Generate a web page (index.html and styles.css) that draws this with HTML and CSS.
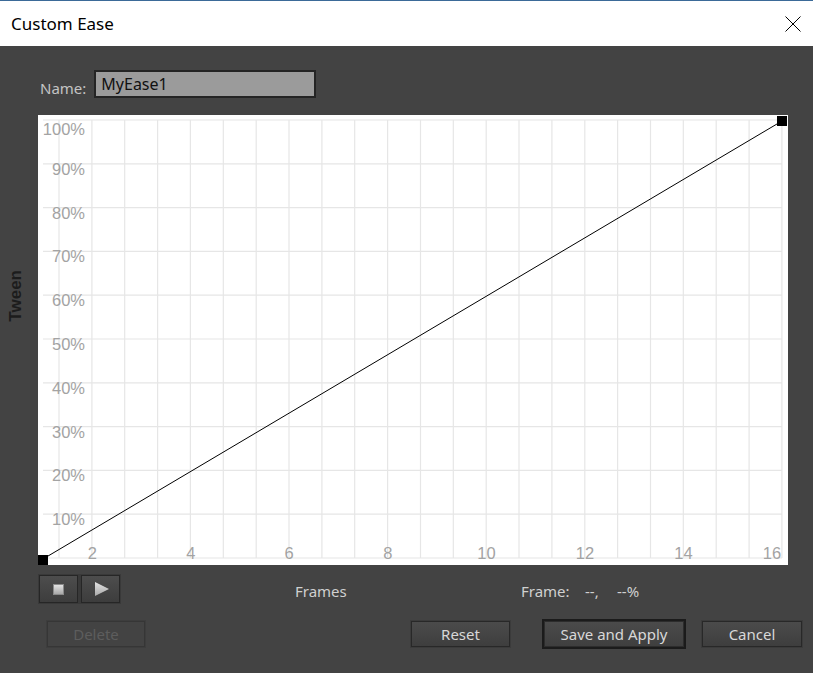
FILE: index.html
```html
<!DOCTYPE html>
<html>
<head>
<meta charset="utf-8">
<title>Custom Ease</title>
<link rel="stylesheet" href="styles.css">
</head>
<body>
<div class="window">
  <header class="titlebar">
    <span class="title">Custom Ease</span>
    <button class="close" aria-label="Close">
      <svg width="16" height="16" viewBox="0 0 16 16"><path d="M0.5 0.5 L15.5 15.5 M15.5 0.5 L0.5 15.5" stroke="#000" stroke-width="1" fill="none"/></svg>
    </button>
  </header>
  <main class="content">
    <div class="name-row">
      <label class="name-label">Name:</label>
      <div class="name-input">MyEase1</div>
    </div>
    <div class="graph-row">
      <div class="axis"><span class="axis-text">Tween</span></div>
      <div class="graph">
        <svg width="750" height="450" viewBox="0 0 750 450">
          <g class="grid">
            <line x1="5" y1="5" x2="744" y2="5"/>
            <line x1="5" y1="48.8" x2="744" y2="48.8"/>
            <line x1="5" y1="92.6" x2="744" y2="92.6"/>
            <line x1="5" y1="136.4" x2="744" y2="136.4"/>
            <line x1="5" y1="180.2" x2="744" y2="180.2"/>
            <line x1="5" y1="224" x2="744" y2="224"/>
            <line x1="5" y1="267.8" x2="744" y2="267.8"/>
            <line x1="5" y1="311.6" x2="744" y2="311.6"/>
            <line x1="5" y1="355.4" x2="744" y2="355.4"/>
            <line x1="5" y1="399.2" x2="744" y2="399.2"/>
            <line x1="5" y1="443" x2="744" y2="443"/>
            <line x1="21" y1="5" x2="21" y2="443"/>
            <line x1="53.9" y1="5" x2="53.9" y2="443"/>
            <line x1="86.7" y1="5" x2="86.7" y2="443"/>
            <line x1="119.6" y1="5" x2="119.6" y2="443"/>
            <line x1="152.4" y1="5" x2="152.4" y2="443"/>
            <line x1="185.3" y1="5" x2="185.3" y2="443"/>
            <line x1="218.2" y1="5" x2="218.2" y2="443"/>
            <line x1="251" y1="5" x2="251" y2="443"/>
            <line x1="283.9" y1="5" x2="283.9" y2="443"/>
            <line x1="316.7" y1="5" x2="316.7" y2="443"/>
            <line x1="349.6" y1="5" x2="349.6" y2="443"/>
            <line x1="382.5" y1="5" x2="382.5" y2="443"/>
            <line x1="415.3" y1="5" x2="415.3" y2="443"/>
            <line x1="448.2" y1="5" x2="448.2" y2="443"/>
            <line x1="481" y1="5" x2="481" y2="443"/>
            <line x1="513.9" y1="5" x2="513.9" y2="443"/>
            <line x1="546.8" y1="5" x2="546.8" y2="443"/>
            <line x1="579.6" y1="5" x2="579.6" y2="443"/>
            <line x1="612.5" y1="5" x2="612.5" y2="443"/>
            <line x1="645.3" y1="5" x2="645.3" y2="443"/>
            <line x1="678.2" y1="5" x2="678.2" y2="443"/>
            <line x1="711.1" y1="5" x2="711.1" y2="443"/>
            <line x1="743.9" y1="5" x2="743.9" y2="443"/>
          </g>
          <g class="ylabels">
            <text x="47" y="20">100%</text>
            <text x="47" y="60">90%</text>
            <text x="47" y="103.6">80%</text>
            <text x="47" y="147.4">70%</text>
            <text x="47" y="191.2">60%</text>
            <text x="47" y="235">50%</text>
            <text x="47" y="278.8">40%</text>
            <text x="47" y="322.6">30%</text>
            <text x="47" y="366.4">20%</text>
            <text x="47" y="410.2">10%</text>
          </g>
          <g class="xlabels">
            <text x="54.3" y="443.5">2</text>
            <text x="152.8" y="443.5">4</text>
            <text x="251" y="443.5">6</text>
            <text x="349.9" y="443.5">8</text>
            <text x="448.4" y="443.5">10</text>
            <text x="547" y="443.5">12</text>
            <text x="645.5" y="443.5">14</text>
            <text x="734" y="443.5">16</text>
          </g>
          <line class="curve" x1="5" y1="444" x2="744" y2="6"/>
          <rect x="0" y="440" width="10" height="10" fill="#000"/>
          <rect x="739" y="1" width="10" height="10" fill="#000"/>
        </svg>
      </div>
    </div>
    <div class="controls">
      <div class="transport">
        <button class="tbtn" aria-label="Stop"><span class="stop-icon"></span></button>
        <button class="tbtn" aria-label="Play">
          <svg width="14" height="14" viewBox="0 0 14 14"><defs><linearGradient id="pg" x1="0" y1="0" x2="0" y2="1"><stop offset="0" stop-color="#e2e2e2"/><stop offset="1" stop-color="#a9a9a9"/></linearGradient></defs><path d="M0 0 L14 7 L0 14 Z" fill="url(#pg)"/></svg>
        </button>
      </div>
      <span class="frames-label">Frames</span>
      <div class="readout">
        <span class="readout-key">Frame:</span>
        <span class="readout-val">--,</span>
        <span class="readout-val">--%</span>
      </div>
    </div>
    <div class="actions">
      <button class="btn btn-delete" disabled>Delete</button>
      <button class="btn btn-reset">Reset</button>
      <button class="btn btn-save">Save and Apply</button>
      <button class="btn btn-cancel">Cancel</button>
    </div>
  </main>
</div>
</body>
</html>
```

FILE: styles.css
```css
* { box-sizing: border-box; }

html, body {
  margin: 0;
  padding: 0;
}

body {
  width: 813px;
  height: 673px;
  overflow: hidden;
  background: #434343;
  font-family: "Noto Sans", "Open Sans", sans-serif;
}

.window {
  width: 813px;
  height: 673px;
  background: #434343;
}

.titlebar {
  height: 46px;
  border-top: 1px solid #3b6a98;
  background: #ffffff;
  display: flex;
  align-items: center;
  justify-content: space-between;
  padding: 0 12px 0 11px;
}

.title {
  font-size: 17px;
  color: #000;
  line-height: 24px;
}

.close {
  border: 0;
  background: transparent;
  padding: 0;
  width: 16px;
  height: 16px;
  display: block;
}

.close svg { display: block; }

.content {
  padding-top: 24px;
}

.name-row {
  display: flex;
  align-items: center;
  margin-left: 40px;
  gap: 8px;
  height: 28px;
}

.name-label {
  font-size: 15px;
  color: #c4c4c4;
  line-height: 20px;
  margin-top: 8px;
}

.name-input {
  width: 222px;
  height: 28px;
  border: 2px solid #242424;
  background: #9b9b9b;
  padding-left: 5px;
  font-size: 16px;
  line-height: 24px;
  color: #111;
}

.graph-row {
  display: flex;
  margin-top: 17px;
}

.axis {
  width: 38px;
  padding-top: 155px;
  padding-left: 7px;
}

.axis-text {
  display: block;
  writing-mode: vertical-rl;
  transform: rotate(180deg);
  font-family: "Liberation Sans", Arial, sans-serif;
  font-weight: bold;
  font-size: 17px;
  line-height: 17px;
  color: #1c1c1c;
}

.graph {
  width: 750px;
  height: 450px;
  background: #ffffff;
}

.graph svg { display: block; }

.grid line {
  stroke: #e6e6e6;
  stroke-width: 1.2;
}

.ylabels text {
  font-family: "Liberation Sans", Arial, sans-serif;
  font-size: 16.5px;
  fill: #a3a3a3;
  text-anchor: end;
}

.xlabels text {
  font-family: "Liberation Sans", Arial, sans-serif;
  font-size: 16.5px;
  fill: #a3a3a3;
  text-anchor: middle;
}

.curve {
  stroke: #000;
  stroke-width: 1;
}

.controls {
  display: grid;
  grid-template-columns: 257px 226px auto;
  align-items: center;
  margin: 9px 0 0 38px;
  height: 30px;
}

.transport {
  display: flex;
  gap: 3px;
  padding: 1px;
  background: #393939;
  width: fit-content;
}

.tbtn {
  width: 39px;
  height: 28px;
  border: 1px solid #262626;
  background: linear-gradient(#4d4d4d, #3d3d3d);
  display: flex;
  align-items: center;
  justify-content: center;
  padding: 0;
}

.tbtn svg { display: block; margin-left: 2px; }

.stop-icon {
  display: block;
  width: 11px;
  height: 11px;
  background: linear-gradient(#e2e2e2, #a8a8a8);
  border: 1px solid #8a8a8a;
}

.frames-label {
  font-size: 15px;
  color: #d0d0d0;
  line-height: 20px;
  padding-top: 4px;
}

.readout {
  display: flex;
  font-size: 15px;
  color: #d0d0d0;
  line-height: 20px;
  padding-top: 4px;
}

.readout-key { width: 64px; }
.readout-val { width: 32px; }

.actions {
  display: flex;
  align-items: center;
  margin-top: 15px;
  padding: 0 11px 0 47px;
  height: 30px;
}

.btn {
  height: 26px;
  border: 1px solid #282828;
  background: linear-gradient(#4b4b4b, #3e3e3e);
  box-shadow: 0 0 0 1px #3b3b3b;
  color: #d8d8d8;
  font-family: "Noto Sans", "Open Sans", sans-serif;
  font-size: 15px;
  line-height: 22px;
  padding: 0;
}

.btn-delete {
  width: 98px;
  background: #434343;
  border-color: #363636;
  box-shadow: 0 0 0 1px #3d3d3d;
  color: #5d5d5d;
}

.btn-reset {
  width: 99px;
  margin-left: auto;
}

.btn-save {
  width: 144px;
  height: 30px;
  margin-left: 32px;
  border: 2px solid #1b1b1b;
  box-shadow: inset 0 0 0 1px #2c2c2c;
}

.btn-cancel {
  width: 100px;
  margin-left: 16px;
}
```
